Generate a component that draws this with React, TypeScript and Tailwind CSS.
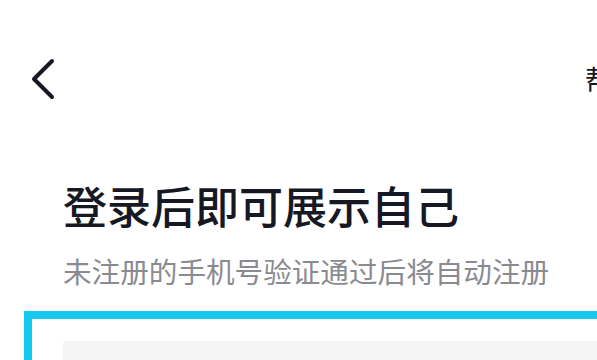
import React from "react";

const BackIcon = () => (
  <svg width="26" height="42" viewBox="0 0 26 42" fill="none">
    <polyline
      points="22,3 4,21 22,39"
      stroke="#161823"
      strokeWidth="4"
      strokeLinecap="round"
      strokeLinejoin="round"
    />
  </svg>
);

const App: React.FC = () => {
  return (
    <div
      className="h-[360px] w-[597px] overflow-hidden bg-white text-[#161823]"
      style={{ fontFamily: '"Noto Sans CJK SC", "Noto Sans", sans-serif' }}
    >
      <header className="flex h-[158px] w-[641px] items-center pl-[30px]">
        <BackIcon />
        <span className="ml-auto whitespace-nowrap text-[28px] leading-[28px]">帮助</span>
      </header>

      <div className="pl-[63px]">
        <h1 className="mt-[25px] whitespace-nowrap text-[44px] font-medium leading-[44px]">
          登录后即可展示自己
        </h1>
        <p className="mt-[29px] whitespace-nowrap text-[28.6px] leading-[29px] text-[#8a8b91]">
          未注册的手机号验证通过后将自动注册
        </p>
      </div>

      <div className="ml-[24px] mt-[26px] w-[620px] border-[8px] border-[#15c8ef] pl-[31px] pt-[22px]">
        <div className="h-[60px] w-full rounded-[4px] bg-[#f5f5f5]" />
      </div>
    </div>
  );
};

export default App;
